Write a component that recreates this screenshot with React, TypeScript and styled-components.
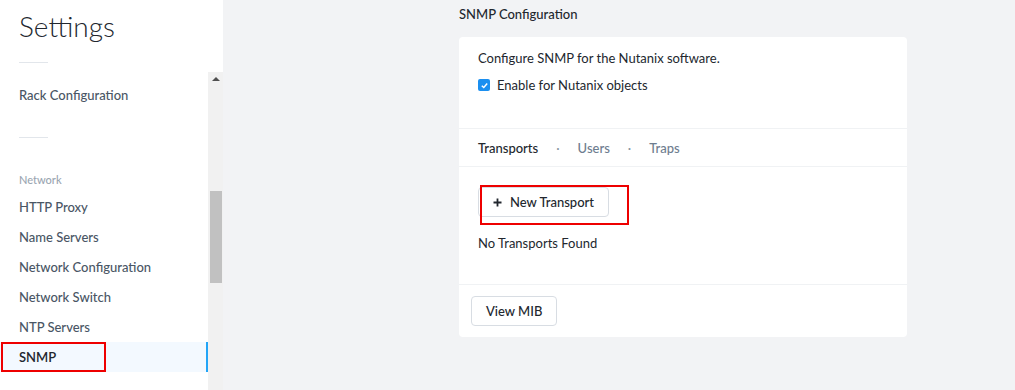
import React from 'react';
import styled, { createGlobalStyle } from 'styled-components';

const GlobalStyle = createGlobalStyle`
  html, body {
    margin: 0;
    padding: 0;
    background: #f2f3f5;
    font-family: Lato, "Open Sans", sans-serif;
    color: #22272e;
  }
`;

const Page = styled.div`
  display: flex;
  width: 1015px;
  height: 390px;
  overflow: hidden;
  background: #f2f3f5;
`;

const Sidebar = styled.aside`
  width: 223px;
  flex-shrink: 0;
  background: #ffffff;
  display: flex;
  flex-direction: column;
`;

const Title = styled.h1`
  margin: 0;
  padding: 9px 0 0 19px;
  font-size: 28px;
  line-height: 34px;
  font-weight: 300;
  color: #22272e;
`;

const ShortRule = styled.div`
  width: 29px;
  height: 1px;
  background: #e2e6eb;
  margin: ${({ $top }: { $top: number }) => `${$top}px 0 0 19px`};
`;

const ScrollArea = styled.div`
  flex: 1;
  display: flex;
  margin-top: 9px;
  min-height: 0;
`;

const NavList = styled.nav`
  flex: 1;
  display: flex;
  flex-direction: column;
  padding-top: 8px;
`;

const Track = styled.div`
  width: 15px;
  background: #f1f1f1;
  position: relative;
`;

const Arrow = styled.div`
  width: 0;
  height: 0;
  margin: 5px auto 0;
  border-left: 4px solid transparent;
  border-right: 4px solid transparent;
  border-bottom: 4px solid #505050;
`;

const Thumb = styled.div`
  position: absolute;
  left: 2px;
  right: 1px;
  top: 119px;
  height: 92px;
  background: #c1c1c1;
`;

const SectionLabel = styled.div`
  padding-left: 19px;
  font-size: 11px;
  line-height: 14px;
  font-weight: 500;
  color: #9aa5b1;
  margin: 35px 0 5px;
`;

const NavItem = styled.div<{ $active?: boolean }>`
  position: relative;
  height: 30px;
  display: flex;
  align-items: center;
  padding-left: 19px;
  font-size: 13px;
  font-weight: ${({ $active }) => ($active ? 600 : 500)};
  color: ${({ $active }) => ($active ? '#22272e' : '#4a5665')};
  background: ${({ $active }) => ($active ? '#f3f9ff' : 'transparent')};
  border-right: 2px solid ${({ $active }) => ($active ? '#22a5f7' : 'transparent')};
`;

const Highlight = styled.div<{ $l: number; $t: number; $w: number; $h: number }>`
  position: absolute;
  left: ${({ $l }) => $l}px;
  top: ${({ $t }) => $t}px;
  width: ${({ $w }) => $w}px;
  height: ${({ $h }) => $h}px;
  border: 2px solid #ee0000;
  box-sizing: border-box;
  pointer-events: none;
`;

const Main = styled.main`
  flex: 1;
  padding: 6px 0 0 236px;
`;

const Heading = styled.h2`
  margin: 0 0 15px;
  font-size: 13px;
  line-height: 16px;
  font-weight: 500;
  color: #22272e;
`;

const Card = styled.section`
  width: 448px;
  background: #ffffff;
  border-radius: 4px;
`;

const Intro = styled.div`
  height: 92px;
  box-sizing: border-box;
  padding: 13px 19px 0;
  font-size: 13px;
  color: #22272e;
  border-bottom: 1px solid #f0f2f4;
`;

const IntroText = styled.p`
  margin: 0 0 11px;
  line-height: 16px;
`;

const CheckRow = styled.label`
  display: flex;
  align-items: center;
  gap: 7px;
  line-height: 16px;
`;

const Box = styled.span`
  width: 12px;
  height: 12px;
  border-radius: 2px;
  background: #1b8ff0;
  display: flex;
  align-items: center;
  justify-content: center;
`;

const Tabs = styled.div`
  height: 37px;
  display: flex;
  align-items: center;
  padding-left: 19px;
  font-size: 13px;
  border-bottom: 1px solid #f0f2f4;
`;

const Tab = styled.span<{ $active?: boolean }>`
  color: ${({ $active }) => ($active ? '#22272e' : '#6e7d8f')};
  font-weight: 500;
`;

const Dot = styled.span`
  color: #8a96a3;
  margin: 0 18px 0 18px;
`;

const Content = styled.div`
  position: relative;
  height: 118px;
  box-sizing: border-box;
  padding: 20px 19px 0;
  border-bottom: 1px solid #f0f2f4;
`;

const Button = styled.button`
  height: 30px;
  padding: 0 ${({ $pad }: { $pad: number }) => $pad}px;
  display: inline-flex;
  align-items: center;
  gap: 8px;
  background: #ffffff;
  border: 1px solid #d8dde3;
  border-radius: 4px;
  font-family: inherit;
  font-size: 13px;
  font-weight: 500;
  color: #22272e;
`;

const Empty = styled.div`
  margin-top: 18px;
  font-size: 13px;
  color: #22272e;
`;

const Footer = styled.div`
  padding: 11px 12px 11px;
`;

export default function App() {
  return (
    <>
      <GlobalStyle />
      <Page>
        <Sidebar>
          <Title>Settings</Title>
          <ShortRule $top={19} />
          <ScrollArea>
            <NavList>
              <NavItem>Rack Configuration</NavItem>
              <ShortRule $top={27} />
              <SectionLabel>Network</SectionLabel>
              <NavItem>HTTP Proxy</NavItem>
              <NavItem>Name Servers</NavItem>
              <NavItem>Network Configuration</NavItem>
              <NavItem>Network Switch</NavItem>
              <NavItem>NTP Servers</NavItem>
              <NavItem $active>
                SNMP
                <Highlight $l={1} $t={0} $w={105} $h={30} />
              </NavItem>
            </NavList>
            <Track>
              <Arrow />
              <Thumb />
            </Track>
          </ScrollArea>
        </Sidebar>
        <Main>
          <Heading>SNMP Configuration</Heading>
          <Card>
            <Intro>
              <IntroText>Configure SNMP for the Nutanix software.</IntroText>
              <CheckRow>
                <Box>
                  <svg width="9" height="9" viewBox="0 0 10 10">
                    <path d="M2 5.2 L4.2 7.3 L8 2.8" fill="none" stroke="#fff" strokeWidth="1.6" />
                  </svg>
                </Box>
                Enable for Nutanix objects
              </CheckRow>
            </Intro>
            <Tabs>
              <Tab $active>Transports</Tab>
              <Dot>·</Dot>
              <Tab>Users</Tab>
              <Dot>·</Dot>
              <Tab>Traps</Tab>
            </Tabs>
            <Content>
              <Button $pad={14}>
                <svg width="9" height="9" viewBox="0 0 9 9">
                  <path d="M4.5 0.5 V8.5 M0.5 4.5 H8.5" stroke="#22272e" strokeWidth="1.8" />
                </svg>
                New Transport
              </Button>
              <Empty>No Transports Found</Empty>
              <Highlight $l={21} $t={18} $w={149} $h={40} />
            </Content>
            <Footer>
              <Button $pad={14}>View MIB</Button>
            </Footer>
          </Card>
        </Main>
      </Page>
    </>
  );
}
